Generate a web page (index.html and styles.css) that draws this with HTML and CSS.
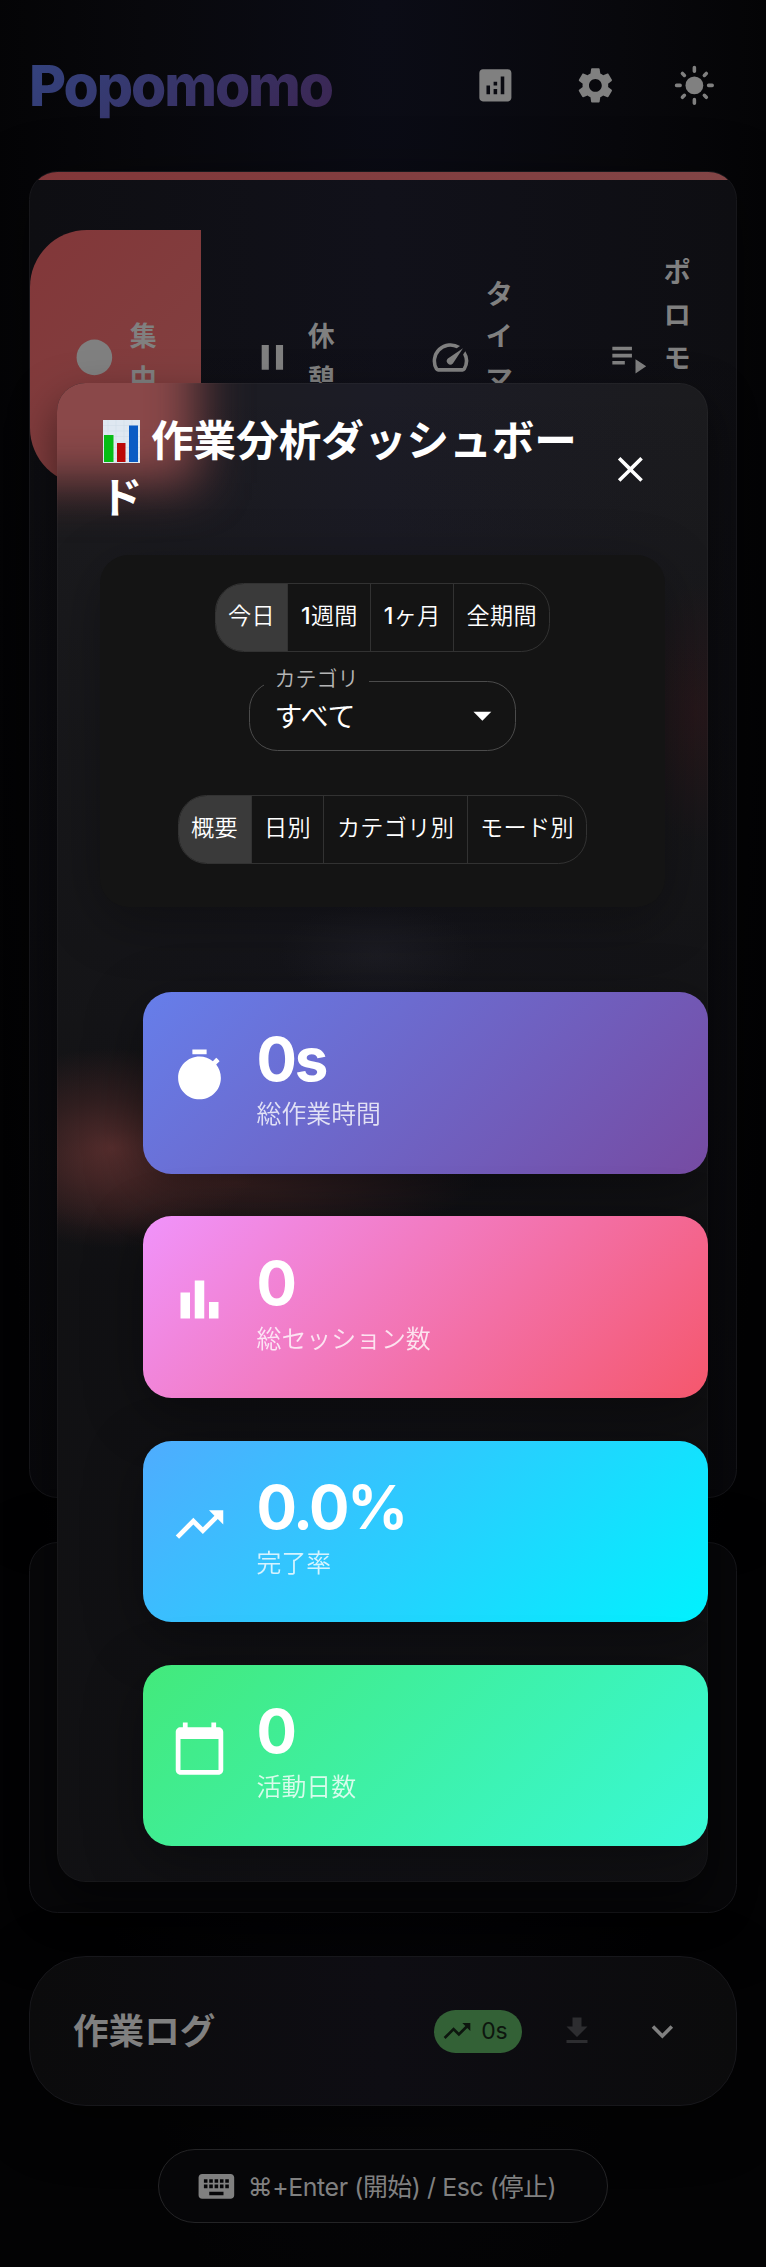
FILE: index.html
```html
<!DOCTYPE html>
<html lang="ja">
<head>
<meta charset="utf-8">
<title>Popomomo</title>
<link rel="stylesheet" href="styles.css">
</head>
<body>
<div class="page">
  <header class="header">
    <h1 class="brand">Popomomo</h1>
    <div class="header-actions">
      <svg class="icon" viewBox="0 0 24 24"><path d="M19 3H5c-1.1 0-2 .9-2 2v14c0 1.1.9 2 2 2h14c1.1 0 2-.9 2-2V5c0-1.1-.9-2-2-2zM9 17H7v-5h2v5zm4 0h-2v-3h2v3zm0-5h-2v-2h2v2zm4 5h-2V7h2v10z"/></svg>
      <svg class="icon" viewBox="0 0 24 24"><path d="M19.14 12.94c.04-.3.06-.61.06-.94 0-.32-.02-.64-.07-.94l2.03-1.58c.18-.14.23-.41.12-.61l-1.92-3.32c-.12-.22-.37-.29-.59-.22l-2.39.96c-.5-.38-1.03-.7-1.62-.94l-.36-2.54c-.04-.24-.24-.41-.48-.41h-3.84c-.24 0-.43.17-.47.41l-.36 2.54c-.59.24-1.13.57-1.62.94l-2.39-.96c-.22-.08-.47 0-.59.22L2.74 8.87c-.12.21-.08.47.12.61l2.03 1.58c-.05.3-.09.63-.09.94s.02.64.07.94l-2.03 1.58c-.18.14-.23.41-.12.61l1.92 3.32c.12.22.37.29.59.22l2.39-.96c.5.38 1.03.7 1.62.94l.36 2.54c.05.24.24.41.48.41h3.84c.24 0 .44-.17.47-.41l.36-2.54c.59-.24 1.13-.56 1.62-.94l2.39.96c.22.08.47 0 .59-.22l1.92-3.32c.12-.22.07-.47-.12-.61l-2.01-1.58zM12 15.6c-1.98 0-3.6-1.62-3.6-3.6s1.62-3.6 3.6-3.6 3.6 1.62 3.6 3.6-1.62 3.6-3.6 3.6z"/></svg>
      <svg class="icon" viewBox="0 0 24 24"><circle cx="12" cy="12" r="5"/><path d="M12 2v2M12 20v2M2 12h2M20 12h2M5.3 5.3l1.1 1.1M17.6 17.6l1.1 1.1M5.3 18.7l1.1-1.1M17.6 6.4l1.1-1.1" stroke="currentColor" stroke-width="2" stroke-linecap="round"/></svg>
    </div>
  </header>

  <section class="card timer-card">
    <div class="card-stripe"></div>
    <div class="tabs">
      <div class="tab tab-active"><svg class="icon" viewBox="0 0 24 24"><circle cx="12" cy="12" r="10"/></svg><span class="tab-label">集中</span></div>
      <div class="tab"><svg class="icon" viewBox="0 0 24 24"><path d="M6 19h4V5H6v14zm8-14v14h4V5h-4z"/></svg><span class="tab-label">休憩</span></div>
      <div class="tab"><svg class="icon" viewBox="0 0 24 24"><path d="m20.38 8.57-1.23 1.85a8 8 0 0 1-.22 7.58H5.07A8 8 0 0 1 15.58 6.85l1.85-1.23A10 10 0 0 0 3.35 19a2 2 0 0 0 1.72 1h13.85a2 2 0 0 0 1.74-1 10 10 0 0 0-.27-10.44zm-9.79 6.84a2 2 0 0 0 2.83 0l5.66-8.49-8.49 5.66a2 2 0 0 0 0 2.83z"/></svg><span class="tab-label">タイマー</span></div>
      <div class="tab"><svg class="icon" viewBox="0 0 24 24"><path d="M3 10h11v2H3zm0-4h11v2H3zm0 8h7v2H3zm13-1v8l6-4z"/></svg><span class="tab-label">ポロモード</span></div>
    </div>
  </section>

  <section class="card task-card"></section>

  <section class="card log-card">
    <h2 class="log-title">作業ログ</h2>
    <div class="chip"><svg class="chip-icon" viewBox="0 0 24 24"><path d="m16 6 2.29 2.29-4.88 4.88-4-4L2 16.59 3.41 18l6-6 4 4 6.3-6.29L22 12V6z"/></svg>0s</div>
    <svg class="icon download" viewBox="0 0 24 24"><path d="M5 20h14v-2H5v2zM19 9h-4V3H9v6H5l7 7 7-7z"/></svg>
    <svg class="icon" viewBox="0 0 24 24"><path d="M16.59 8.59 12 13.17 7.41 8.59 6 10l6 6 6-6z"/></svg>
  </section>

  <div class="shortcuts">
    <svg class="icon" viewBox="0 0 24 24"><path d="M20 5H4c-1.1 0-1.99.9-1.99 2L2 17c0 1.1.9 2 2 2h16c1.1 0 2-.9 2-2V7c0-1.1-.9-2-2-2zm-9 3h2v2h-2V8zm0 3h2v2h-2v-2zM8 8h2v2H8V8zm0 3h2v2H8v-2zm-1 2H5v-2h2v2zm0-3H5V8h2v2zm9 7H8v-2h8v2zm0-4h-2v-2h2v2zm0-3h-2V8h2v2zm3 3h-2v-2h2v2zm0-3h-2V8h2v2z"/></svg>
    <span class="shortcuts-text">⌘+Enter (開始) / Esc (停止)</span>
  </div>
</div>

<div class="dialog" role="dialog">
  <div class="dialog-glow"></div>
  <div class="dialog-body">
    <div class="dialog-head">
      <h2 class="dialog-title"><svg class="chart-emoji" viewBox="0 0 37 43"><rect width="37" height="43" fill="#dfe8f1"/><path d="M0 5.5h37M0 11h37M0 16.500h37M0 22h37M0 27.500h37M0 33h37M0 38.500h37M5 0v43M13 0v43M21 0v43M29 0v43" stroke="#d2dee9" stroke-width=".6"/><rect x="1" y="15" width="9.500" height="27" fill="#06bd14"/><rect x="14" y="23" width="8.500" height="19" fill="#bb0808"/><rect x="26" y="5.500" width="9" height="36.500" fill="#0a5bc4"/></svg>作業分析ダッシュボード</h2>
      <svg class="icon" viewBox="0 0 24 24"><path d="M19 6.41 17.59 5 12 10.59 6.41 5 5 6.41 10.59 12 5 17.59 6.41 19 12 13.41 17.59 19 19 17.59 13.41 12z"/></svg>
    </div>
    <div class="filters">
      <div class="toggle-group">
        <div class="toggle toggle-on">今日</div><div class="toggle"><span class="digit">1</span>週間</div><div class="toggle"><span class="digit">1</span>ヶ月</div><div class="toggle">全期間</div>
      </div>
      <fieldset class="select">
        <legend class="select-label">カテゴリ</legend>
        <div class="select-value">すべて<svg class="icon" viewBox="0 0 24 24"><path d="m7 10 5 5 5-5z"/></svg></div>
      </fieldset>
      <div class="toggle-group">
        <div class="toggle toggle-on">概要</div><div class="toggle">日別</div><div class="toggle">カテゴリ別</div><div class="toggle">モード別</div>
      </div>
    </div>
    <div class="stats">
      <div class="stat stat-time">
        <svg class="stat-icon" viewBox="0 0 24 24"><path d="M15 1H9v2h6V1zm-4 13h2V8h-2v6zm8.03-6.61l1.42-1.42c-.43-.51-.9-.99-1.41-1.41l-1.42 1.42C16.07 4.74 14.12 4 12 4c-4.97 0-9 4.03-9 9s4.02 9 9 9 9-4.03 9-9c0-2.12-.74-4.07-1.97-5.61z"/></svg>
        <div><div class="stat-value">0s</div><div class="stat-label">総作業時間</div></div>
      </div>
      <div class="stat stat-sessions">
        <svg class="stat-icon" viewBox="0 0 24 24"><path d="M4 9h4v11H4zm12 4h4v7h-4zm-6-9h4v16h-4z"/></svg>
        <div><div class="stat-value">0</div><div class="stat-label">総セッション数</div></div>
      </div>
      <div class="stat stat-rate">
        <svg class="stat-icon" viewBox="0 0 24 24"><path d="m16 6 2.29 2.29-4.88 4.88-4-4L2 16.59 3.41 18l6-6 4 4 6.3-6.29L22 12V6z"/></svg>
        <div><div class="stat-value">0.0%</div><div class="stat-label">完了率</div></div>
      </div>
      <div class="stat stat-days">
        <svg class="stat-icon" viewBox="0 0 24 24"><path d="M20 3h-1V1h-2v2H7V1H5v2H4c-1.1 0-2 .9-2 2v16c0 1.1.9 2 2 2h16c1.1 0 2-.9 2-2V5c0-1.1-.9-2-2-2zm0 18H4V8h16v13z"/></svg>
        <div><div class="stat-value">0</div><div class="stat-label">活動日数</div></div>
      </div>
    </div>
  </div>
</div>
</body>
</html>
```

FILE: styles.css
```css
* { box-sizing: border-box; }

body {
  margin: 0;
  position: relative;
  height: 2267px;
  overflow: hidden;
  background: radial-gradient(ellipse 430px 2500px at 50% 0, #0b0c16 0%, #08080c 55%, #030304 100%);
  font-family: Inter, "Noto Sans CJK JP", sans-serif;
  color: #808080;
}

h1, h2 { margin: 0; }

.icon {
  width: 42.75px;
  height: 42.75px;
  flex: none;
  display: block;
  fill: currentColor;
}

.page {
  display: flex;
  flex-direction: column;
  padding: 0 29px;
}

.header {
  height: 171px;
  display: flex;
  align-items: center;
  justify-content: space-between;
  padding-right: 21px;
}

.brand {
  font-size: 57px;
  font-weight: 800;
  letter-spacing: -2.1px;
  line-height: 1.2;
  padding: 2px 4px 0 0;
  background: linear-gradient(135deg, #33437f, #3b2551);
  background-clip: text;
  -webkit-background-clip: text;
  color: transparent;
}

.header-actions { display: flex; gap: 57px; }

.card {
  border: 1.5px solid #17171b;
  border-radius: 28.5px;
  box-shadow: 0 14px 57px rgba(0, 0, 0, .5);
  overflow: hidden;
}

.timer-card {
  height: 1327px;
  background: linear-gradient(180deg, transparent 10%, rgba(6, 6, 9, .75) 100%), linear-gradient(90deg, #0e0e12, #11111a 50%, #0e0e12);
}

.card-stripe { height: 7.5px; background: linear-gradient(90deg, #823739, #824546); }

.tabs { display: flex; gap: 7px; margin-top: 50px; }

.tab {
  width: 171px;
  height: 255px;
  flex: none;
  display: flex;
  align-items: center;
  gap: 14px;
  padding-left: 43px;
}

.tab-active {
  border-radius: 57px 0 0 57px;
  background: linear-gradient(135deg, #823739, #824242);
}

.tab-label {
  width: 28px;
  padding-top: 4px;
  font-size: 27px;
  font-weight: 600;
  line-height: 42.75px;
  word-break: break-all;
  line-break: anywhere;
}

.task-card { height: 371px; margin-top: 44px; background: #070709; }

.log-card {
  height: 150px;
  margin-top: 43px;
  border-radius: 57px;
  display: flex;
  align-items: center;
  padding: 0 52px 0 43px;
  background: linear-gradient(90deg, #0b0b0c, #0e0d13 50%, #0b0b0c);
}

.log-title { font-size: 35.6px; font-weight: 600; margin-right: auto; padding-bottom: 5px; }

.chip {
  width: 88px;
  height: 43px;
  border-radius: 21.5px;
  display: flex;
  align-items: center;
  padding-left: 7px;
  gap: 8px;
  background: #336136;
  color: #0d160e;
  font-size: 23px;
  letter-spacing: -.3px;
}

.chip-icon { width: 32px; height: 32px; fill: currentColor; }

.download { width: 36px; height: 36px; margin: 0 46px 0 37px; color: #2d2d30; }

.shortcuts {
  align-self: center;
  width: 450px;
  height: 74px;
  margin-top: 43px;
  border: 1.5px solid #242426;
  border-radius: 37px;
  background: #060608;
  display: flex;
  align-items: center;
  padding-left: 36px;
  gap: 10px;
  font-size: 24.9px;
}

.shortcuts-text { letter-spacing: -.42px; padding-bottom: 2px; white-space: nowrap; }

.dialog {
  position: absolute;
  left: 57px;
  top: 383px;
  width: 651px;
  height: 1499px;
  border-radius: 28.5px;
  overflow: hidden;
  color: #fff;
  background:
    radial-gradient(ellipse 150px 100px at 55px 765px, rgba(105, 53, 52, .75), rgba(90, 46, 45, .4) 50%, transparent),
    radial-gradient(ellipse 240px 60px at 180px 800px, rgba(95, 48, 46, .5), transparent),
    radial-gradient(ellipse 60px 130px at 640px 330px, rgba(65, 22, 26, .35), transparent),
    radial-gradient(ellipse 100px 50px at 320px 570px, rgba(60, 60, 68, .2), transparent),
    linear-gradient(180deg, transparent, rgba(12, 12, 14, .7) 60%),
    linear-gradient(90deg, #1c1c1f, #1c1c26 50%, #1b1b1e);
  box-shadow: 0 20px 45px rgba(0, 0, 0, .5), inset 0 0 0 1px rgba(255, 255, 255, .03);
}

/* Soft red light from the active tab behind the dialog */
.dialog-glow {
  position: absolute;
  left: -100px;
  top: -150px;
  width: 240px;
  height: 250px;
  background: #8a4849;
  filter: blur(25px);
}

.dialog-body { position: relative; }

.dialog-head {
  display: flex;
  align-items: center;
  justify-content: space-between;
  padding: 29px 56.5px 28.5px 43px;
}

.dialog-title {
  width: 490px;
  font-size: 42.6px;
  font-weight: 600;
  line-height: 57px;
  word-break: break-all;
  line-break: anywhere;
}

.chart-emoji { width: 37px; height: 43px; margin: 0 11px 0 3px; vertical-align: -7px; }

.filters {
  margin: 0 42.75px;
  height: 352px;
  padding-top: 28.5px;
  border-radius: 28.5px;
  background: #141414;
  box-shadow: 0 14px 57px rgba(0, 0, 0, .3);
  display: flex;
  flex-direction: column;
  align-items: center;
}

.toggle-group {
  display: flex;
  height: 69px;
  border: 1.5px solid #323232;
  border-radius: 28.5px;
  overflow: hidden;
}

.toggle {
  padding: 0 12.5px;
  font-size: 23.15px;
  font-weight: 350;
  line-height: 64px;
  letter-spacing: .3px;
  white-space: nowrap;
}

.digit { font-weight: 500; }

.toggle + .toggle { border-left: 1.5px solid #323232; }

.toggle-on { background: #3a3a3a; }

.select {
  width: 267px;
  height: 82px;
  margin: 17px 0 44px;
  border: 1.5px solid #4b4b4b;
  border-radius: 28.5px;
  padding: 0 11px 0 13.5px;
}

.select-label { font-size: 21px; font-weight: 350; line-height: 20px; height: 24px; padding: 0 10px 0 11px; color: #b5b5b5; }

.select-value {
  display: flex;
  align-items: center;
  justify-content: space-between;
  height: 44px;
  padding-left: 11px;
  font-size: 28px;
}

.stats {
  display: flex;
  flex-direction: column;
  gap: 42.75px;
  margin: 85.5px 0 0 85.5px;
}

.stat {
  height: 181.5px;
  border-radius: 28.5px;
  padding: 28.5px;
  display: flex;
  align-items: flex-start;
  gap: 28.5px;
  box-shadow: 0 14px 57px rgba(0, 0, 0, .35);
}

.stat-time { background: linear-gradient(135deg, #667eea, #764ba2); }
.stat-sessions { background: linear-gradient(135deg, #f093fb, #f5576c); }
.stat-rate { background: linear-gradient(135deg, #4facfe, #00f2fe); }
.stat-days { background: linear-gradient(135deg, #43e97b, #38f9d7); }

.stat-icon { width: 57px; height: 57px; margin-top: 26.5px; fill: #fff; }

.stat-value { font-size: 60px; font-weight: 700; line-height: 76.8px; letter-spacing: -2.2px; }

.stat-label { font-size: 24.9px; font-weight: 350; line-height: 34px; opacity: .8; }
```
